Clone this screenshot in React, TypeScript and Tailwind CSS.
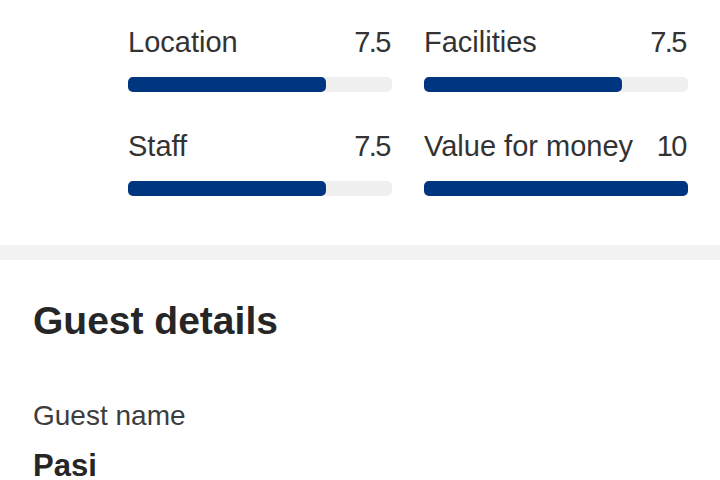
import React from "react";

const scores = [
  { label: "Location", value: "7.5", pct: 75 },
  { label: "Facilities", value: "7.5", pct: 75 },
  { label: "Staff", value: "7.5", pct: 75 },
  { label: "Value for money", value: "10", pct: 100 },
];

function ScoreItem({ label, value, pct }: { label: string; value: string; pct: number }) {
  return (
    <div className="flex flex-col">
      <div className="flex items-center justify-between text-[29px] leading-[32px] text-[#333333] pr-[2px]">
        <span>{label}</span>
        <span className="tracking-[-1.5px]">{value}</span>
      </div>
      <div className="mt-[19px] h-[15px] w-full rounded-[5px] bg-[#f0f0f0]">
        <div className="h-full rounded-[5px] bg-[#003580]" style={{ width: `${pct}%` }} />
      </div>
    </div>
  );
}

export default function App() {
  return (
    <div
      className="w-[720px] h-[480px] overflow-hidden bg-white"
      style={{ fontFamily: '"Liberation Sans", Arial, sans-serif' }}
    >
      <div className="pl-[128px] pr-[32px] pt-[26px] pb-[49px]">
        <div className="grid grid-cols-2 gap-x-[32px] gap-y-[38px]">
          {scores.map((s) => (
            <ScoreItem key={s.label} {...s} />
          ))}
        </div>
      </div>
      <div className="h-[15px] bg-[#f2f2f2]" />
      <div className="px-[33px] pt-[39px]">
        <h2 className="text-[39px] leading-[44px] font-bold text-[#262626]">Guest details</h2>
        <div className="mt-[57px] text-[28px] leading-[32px] text-[#3d3d3d]">Guest name</div>
        <div className="mt-[16px] text-[31px] leading-[36px] font-bold text-[#262626]">Pasi</div>
      </div>
    </div>
  );
}
